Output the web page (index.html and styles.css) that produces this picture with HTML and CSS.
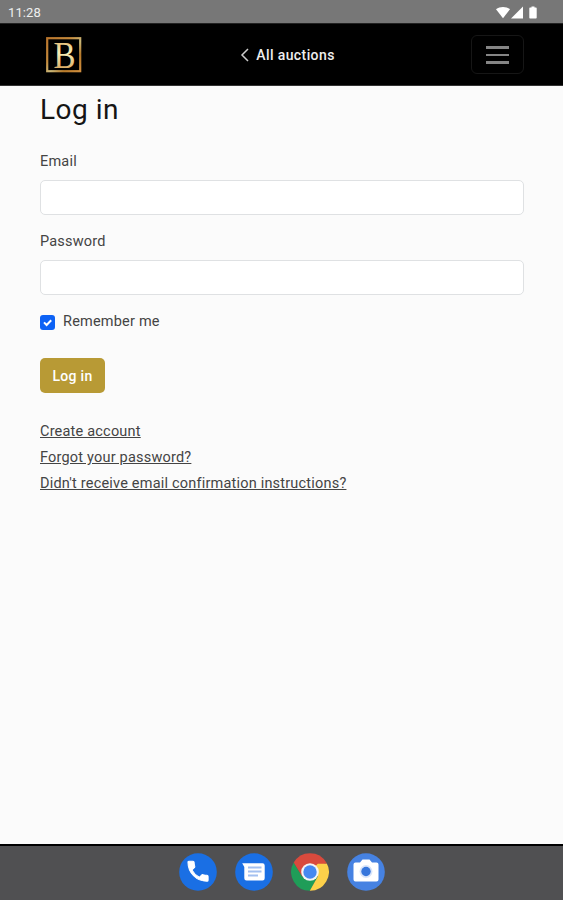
FILE: index.html
```html
<!DOCTYPE html>
<html lang="en">
<head>
    <meta charset="UTF-8">
    <meta name="viewport" content="width=device-width, initial-scale=1.0">
    <title>Log in</title>
    <link rel="stylesheet" href="styles.css">
</head>
<body>

    <div class="status-bar">
        <span class="clock">11:28</span>
        <svg class="status-icons" width="42" height="14" viewBox="0 0 42 14">
            <path d="M0 3.2C4 .2 10 .2 14 3.2L7 12.2z"/>
            <path d="M27 .5V12.5H15z"/>
            <path d="M35.5.5h3v1h1.2c.6 0 1 .4 1 1v9c0 .6-.4 1-1 1h-5.4c-.6 0-1-.4-1-1v-9c0-.6.4-1 1-1h1.2z"/>
        </svg>
    </div>

    <nav class="navbar">
        <svg class="logo" width="36" height="36" viewBox="0 0 36 36">
            <defs>
                <linearGradient id="gold" x1="0" y1="0" x2="1" y2="1">
                    <stop offset="0" stop-color="#b9752c"/>
                    <stop offset=".35" stop-color="#c48a3c"/>
                    <stop offset=".55" stop-color="#c9b778"/>
                    <stop offset=".75" stop-color="#b77a2a"/>
                    <stop offset="1" stop-color="#d08e3e"/>
                </linearGradient>
                <linearGradient id="letter" x1="0" y1="0" x2="0" y2="1">
                    <stop offset="0" stop-color="#d9a050"/>
                    <stop offset=".45" stop-color="#f8efb6"/>
                    <stop offset="1" stop-color="#cf8f42"/>
                </linearGradient>
            </defs>
            <rect x="1.2" y="1.2" width="33" height="33" fill="none" stroke="url(#gold)" stroke-width="2.2"/>
            <text x="7.5" y="30.5" textLength="22" lengthAdjust="spacingAndGlyphs" class="logo-letter" fill="url(#letter)">B</text>
        </svg>
        <a class="back-link" href="#">
            <svg width="10" height="14" viewBox="0 0 10 14"><path d="M8 1L2 7l6 6"/></svg>
            All auctions
        </a>
        <button class="menu-button" aria-label="Menu">
            <span></span>
            <span></span>
            <span></span>
        </button>
    </nav>

    <main class="content">
        <h1>Log in</h1>
        <form>
            <label class="label" for="email">Email</label>
            <input class="field" type="email" id="email">

            <label class="label" for="password">Password</label>
            <input class="field" type="password" id="password">

            <label class="remember">
                <input class="check" type="checkbox" checked>
                <svg class="check-box" width="15" height="15" viewBox="0 0 15 15">
                    <rect width="15" height="15" rx="3"/>
                    <path d="M4 7.4l2.6 2.6 4.6-4.8"/>
                </svg>
                <span>Remember me</span>
            </label>

            <button class="submit" type="button">Log in</button>
        </form>
        <div class="links">
            <a href="#">Create account</a>
            <a href="#">Forgot your password?</a>
            <a href="#">Didn't receive email confirmation instructions?</a>
        </div>
    </main>

    <footer class="dock">
        <svg width="38" height="38" viewBox="0 0 38 38">
            <circle cx="19" cy="19" r="18.8" fill="#1a6fe4"/>
            <path fill="#fff" stroke="#fff" stroke-width=".9" stroke-linejoin="round" transform="translate(5.6 4.8) scale(1.12)" d="M6.6 10.8c1.4 2.8 3.8 5.1 6.6 6.6l2.2-2.2c.3-.3.7-.4 1-.2 1.1.4 2.3.6 3.6.6.6 0 1 .4 1 1V20c0 .6-.4 1-1 1C10.6 21 3 13.4 3 4c0-.6.4-1 1-1h3.5c.6 0 1 .4 1 1 0 1.3.2 2.5.6 3.6.1.3 0 .7-.2 1z"/>
        </svg>
        <svg width="38" height="38" viewBox="0 0 38 38">
            <circle cx="19" cy="19" r="18.8" fill="#1a6fe4"/>
            <path fill="#fff" d="M7.2 10.3H27.5a2.2 2.2 0 0 1 2.2 2.2V25.3a2.2 2.2 0 0 1-2.2 2.2H11.5a2.2 2.2 0 0 1-2.2-2.2V14z"/>
            <path stroke="#a3c0f0" stroke-width="1.8" d="M13 14.5h13.5M13 18.5h13.5M13 22.5h10"/>
        </svg>
        <svg width="38" height="38" viewBox="0 0 38 38">
            <path fill="#d94a3d" d="M19 19L2.7 9.6A18.8 18.8 0 0 1 35.3 9.6z"/>
            <path fill="#1f9d58" d="M2.7 9.6A18.8 18.8 0 0 0 19 37.8L26.8 23.5 19 19 11.2 23.5z"/>
            <path fill="#fdd04a" d="M35.3 9.6A18.8 18.8 0 0 1 18.8 37.8L26.8 23.5 19 10.4H35.7z"/>
            <path fill="#d94a3d" d="M2.7 9.6L11.2 23.5 19 19l8-8.6h8.7l-.4-.8z"/>
            <circle cx="19" cy="19" r="8.8" fill="#f4f4f4"/>
            <circle cx="19" cy="19" r="6.7" fill="#4688f1"/>
        </svg>
        <svg width="38" height="38" viewBox="0 0 38 38">
            <circle cx="19" cy="19" r="18.8" fill="#4682e2"/>
            <path fill="#fff" d="M8.500 9.500H13l2.500-3h7l2.500 3h4.500a2 2 0 0 1 2 2V26.500a2 2 0 0 1-2 2H8.500a2 2 0 0 1-2-2V11.500a2 2 0 0 1 2-2z"/>
            <circle cx="19" cy="18.5" r="6.5" fill="#d9e5fa"/>
            <circle cx="19" cy="18.5" r="4.7" fill="#3676dc"/>
        </svg>
    </footer>

</body>
</html>
```

FILE: styles.css
```css
* {
    box-sizing: border-box;
}

body {
    display: flex;
    flex-direction: column;
    height: 900px;
    margin: 0;
    background-color: #fbfbfb;
    color: #444;
    font-family: Roboto, sans-serif;
    font-size: 14.5px;
    letter-spacing: 0.2px;
}

.status-bar {
    display: flex;
    align-items: center;
    justify-content: space-between;
    height: 23px;
    padding: 2px 25px 0 8px;
    background-color: #777;
}

.clock {
    color: #eee;
    font-size: 13px;
    letter-spacing: 0.1px;
}

.status-icons {
    fill: #fff;
}

.navbar {
    display: flex;
    align-items: center;
    justify-content: space-between;
    height: 63px;
    padding: 0 39px 0 46px;
    border-top: 1px solid #222;
    border-bottom: 1px solid #333;
    background-color: #000;
}

.logo {
    overflow: visible;
}

.logo-letter {
    font-family: "Liberation Serif", serif;
    font-size: 37px;
    letter-spacing: 0;
}

.back-link {
    display: flex;
    align-items: center;
    gap: 6px;
    margin-left: 22px;
    color: #eee;
    font-size: 14px;
    font-weight: 500;
    letter-spacing: 0.4px;
    text-decoration: none;
}

.back-link svg {
    fill: none;
    stroke: #ccc;
    stroke-width: 1.5;
}

.menu-button {
    display: flex;
    flex-direction: column;
    align-items: center;
    justify-content: center;
    gap: 5px;
    width: 53px;
    height: 39px;
    padding: 1px 0 0;
    border: 1px solid #161616;
    border-radius: 6px;
    background: none;
}

.menu-button span {
    width: 23px;
    height: 2.5px;
    background-color: #858585;
}

.content {
    flex: 1;
    padding: 7px 39px 0 40px;
}

h1 {
    margin: 0 0 24px;
    color: #151515;
    font-size: 28px;
    font-weight: 400;
    letter-spacing: 0.5px;
    line-height: 34px;
}

.label {
    display: block;
    margin-bottom: 7px;
    line-height: 22px;
}

.field {
    display: block;
    width: 100%;
    height: 35px;
    margin-bottom: 16px;
    border: 1px solid #dfe1e3;
    border-radius: 5px;
    background-color: #fff;
}

.remember {
    display: flex;
    align-items: center;
    gap: 8px;
    line-height: 22px;
}

.check {
    display: none;
}

.check-box {
    fill: #0d62f5;
}

.check-box path {
    fill: none;
    stroke: #fff;
    stroke-width: 2;
}

.submit {
    height: 35px;
    width: 65px;
    margin-top: 25px;
    padding: 0;
    border: none;
    border-radius: 5px;
    background-color: #b89a35;
    color: #fff;
    font: 500 14px Roboto, sans-serif;
    letter-spacing: 0.3px;
}

.links {
    display: flex;
    flex-direction: column;
    align-items: flex-start;
    margin-top: 26px;
    line-height: 26px;
}

.links a {
    color: #444;
}

.dock {
    display: flex;
    align-items: center;
    justify-content: center;
    gap: 18px;
    height: 56px;
    padding-bottom: 2px;
    border-top: 2px solid #000;
    background-color: #505052;
}
```
